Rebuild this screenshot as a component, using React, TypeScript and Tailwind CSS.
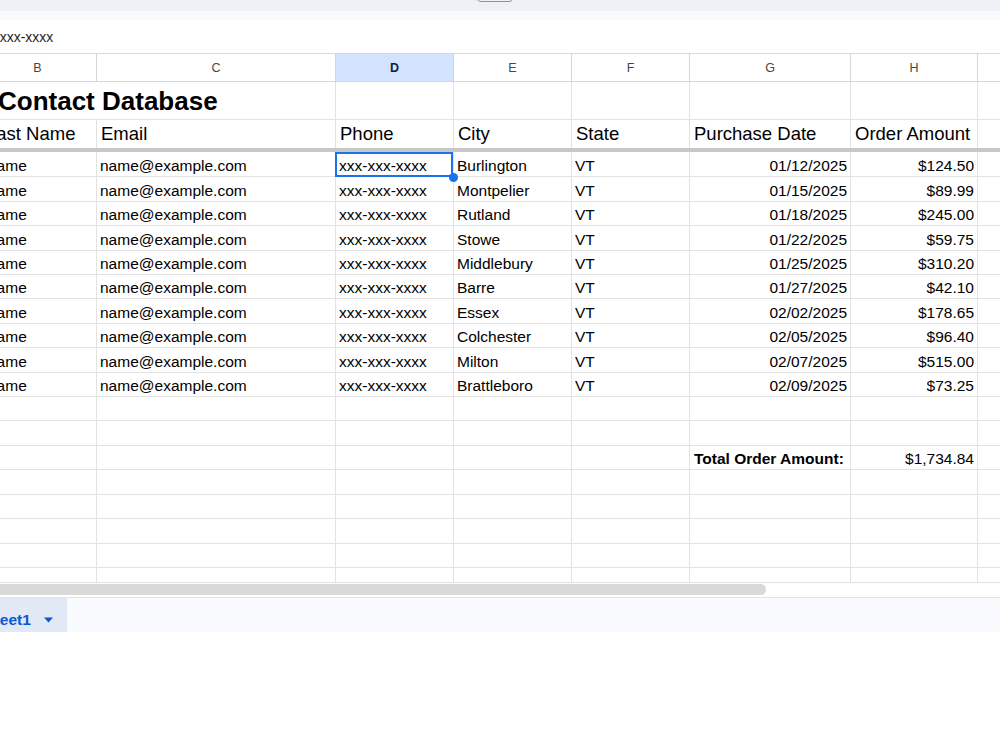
import React from "react";

type Align = "left" | "right";

const colWidths = [
  "w-[118px]", // B
  "w-[239px]", // C
  "w-[118px]", // D
  "w-[118px]", // E
  "w-[118px]", // F
  "w-[161px]", // G
  "w-[127px]", // H
  "w-[118px]", // I
];

const letters = ["B", "C", "D", "E", "F", "G", "H", "I"];

const orders = [
  ["Burlington", "01/12/2025", "$124.50"],
  ["Montpelier", "01/15/2025", "$89.99"],
  ["Rutland", "01/18/2025", "$245.00"],
  ["Stowe", "01/22/2025", "$59.75"],
  ["Middlebury", "01/25/2025", "$310.20"],
  ["Barre", "01/27/2025", "$42.10"],
  ["Essex", "02/02/2025", "$178.65"],
  ["Colchester", "02/05/2025", "$96.40"],
  ["Milton", "02/07/2025", "$515.00"],
  ["Brattleboro", "02/09/2025", "$73.25"],
];

const bodyHeights = [
  "h-[25px]",
  "h-[25px]",
  "h-[24px]",
  "h-[25px]",
  "h-[24px]",
  "h-[24px]",
  "h-[25px]",
  "h-[24px]",
  "h-[25px]",
  "h-[24px]",
  "h-[24px]",
  "h-[25px]",
  "h-[24px]",
  "h-[25px]",
  "h-[24px]",
  "h-[25px]",
  "h-[24px]",
  "h-[15px]",
];

const font = "font-['Liberation_Sans',Arial,sans-serif]";

function Cell({
  col,
  children,
  align = "left",
  className = "",
  noRight = false,
}: {
  col: number;
  children?: React.ReactNode;
  align?: Align;
  className?: string;
  noRight?: boolean;
}) {
  return (
    <div
      className={`${colWidths[col]} shrink-0 h-full flex items-end border-b border-[#e2e2e2] ${
        noRight ? "" : "border-r"
      } ${align === "right" ? "justify-end pr-[3px]" : col === 0 ? "pl-[9px]" : "pl-[3px]"} whitespace-nowrap text-black ${className}`}
    >
      {children}
    </div>
  );
}

function DataRow({
  h,
  values,
  selected = false,
  bold = false,
}: {
  h: string;
  values: (string | null)[];
  selected?: boolean;
  bold?: boolean;
}) {
  return (
    <div className={`flex ${h} text-[15.5px] leading-[18px]`}>
      {values.map((v, i) => {
        const right = i === 5 || i === 6;
        const isTotalLabel = bold && i === 5;
        return (
          <Cell
            key={i}
            col={i}
            align={isTotalLabel ? "left" : right ? "right" : "left"}
            className={`pb-[1px] ${i === 2 && selected ? "relative z-10" : ""} ${isTotalLabel ? "font-bold pl-[4px]" : ""}`}
          >
            {v}
            {i === 2 && selected && (
              <>
                <span className="absolute left-[-1px] top-0 right-0 bottom-[-1px] border-2 border-[#1a73e8]" />
                <span className="absolute right-[-5px] bottom-[-6px] w-[9px] h-[9px] rounded-full bg-[#1a73e8]" />
              </>
            )}
          </Cell>
        );
      })}
    </div>
  );
}

export default function App() {
  const rows: { values: (string | null)[]; bold?: boolean; selected?: boolean }[] = [
    ...orders.map((o, idx) => ({
      values: ["name", "name@example.com", "xxx-xxx-xxxx", o[0], "VT", o[1], o[2], null],
      selected: idx === 0,
    })),
    { values: [null, null, null, null, null, null, null, null] },
    { values: [null, null, null, null, null, null, null, null] },
    {
      values: [null, null, null, null, null, "Total Order Amount:", "$1,734.84", null],
      bold: true,
    },
    { values: [null, null, null, null, null, null, null, null] },
    { values: [null, null, null, null, null, null, null, null] },
    { values: [null, null, null, null, null, null, null, null] },
    { values: [null, null, null, null, null, null, null, null] },
    { values: [null, null, null, null, null, null, null, null] },
  ];

  return (
    <div className={`w-[1000px] h-[750px] overflow-hidden bg-white ${font}`}>
      {/* toolbar edge */}
      <div className="h-[11px] bg-[#eef2f8] flex pl-[476px] overflow-hidden">
        <div className="w-[38px] h-[12px] -mt-[10px] border border-[#8e9398] rounded-[5px] bg-[#eef2f8]" />
      </div>
      <div className="h-[9px] bg-[#f7f9fc]" />

      {/* formula bar */}
      <div className="h-[34px] flex items-center pt-[1px] border-b border-[#d9d9d9] overflow-hidden">
        <span className="-ml-[26px] text-[14px] text-[#1f1f1f] whitespace-nowrap">xxx-xxx-xxxx</span>
      </div>

      {/* grid */}
      <div className="h-[529px] overflow-hidden">
        <div className="-ml-[21px] w-[1200px]">
          {/* column letters */}
          <div className="flex h-[28px] text-[12.5px] text-[#444746]">
            {letters.map((l, i) => (
              <div
                key={l}
                className={`${colWidths[i]} shrink-0 flex items-center justify-center pt-[1px] border-r border-b border-[#d5d5d5] ${
                  i === 2 ? "bg-[#d3e3fd] text-[#0b1f44] font-bold" : "bg-white"
                }`}
              >
                {l}
              </div>
            ))}
          </div>

          {/* title row */}
          <div className="flex h-[38px] text-[26px] leading-[30px] font-bold">
            <Cell col={0} noRight className="pl-[19px] pb-[3px]">
              Contact Database
            </Cell>
            {[1, 2, 3, 4, 5, 6, 7].map((i) => (
              <Cell key={i} col={i} />
            ))}
          </div>

          {/* field names */}
          <div className="flex h-[28px] text-[18.5px] leading-[22px]">
            {["Last Name", "Email", "Phone", "City", "State", "Purchase Date", "Order Amount", ""].map((t, i) => (
              <div
                key={i}
                className={`${colWidths[i]} shrink-0 h-full flex items-end pb-[3px] border-r border-[#e2e2e2] whitespace-nowrap text-black ${
                  i === 0 ? "pl-[7px]" : "pl-[4px]"
                }`}
              >
                {t}
              </div>
            ))}
          </div>

          {/* frozen row divider */}
          <div className="h-[4px] bg-[#c8c8c8]" />

          {rows.map((r, idx) => (
            <DataRow
              key={idx}
              h={bodyHeights[idx]}
              values={r.values}
              bold={r.bold}
              selected={r.selected}
            />
          ))}
        </div>
      </div>

      {/* horizontal scrollbar */}
      <div className="h-[14px] bg-white pt-[1px]">
        <div className="w-[766px] h-[11px] rounded-r-full bg-[#d9d9d9]" />
      </div>

      {/* sheet tabs */}
      <div className="h-[35px] border-t border-[#e1e3e6] bg-[#f9fafd] flex">
        <div className="w-[67px] h-full bg-[#e1e9f7] flex items-center pt-[9px] overflow-hidden">
          <span className="-ml-[20px] text-[15.5px] font-bold text-[#0b57d0] whitespace-nowrap">Sheet1</span>
          <svg className="ml-[13px] shrink-0" width="9" height="6" viewBox="0 0 9 6">
            <path d="M0 0.5 L9 0.5 L4.5 5.5 Z" fill="#0b57d0" />
          </svg>
        </div>
      </div>
    </div>
  );
}
